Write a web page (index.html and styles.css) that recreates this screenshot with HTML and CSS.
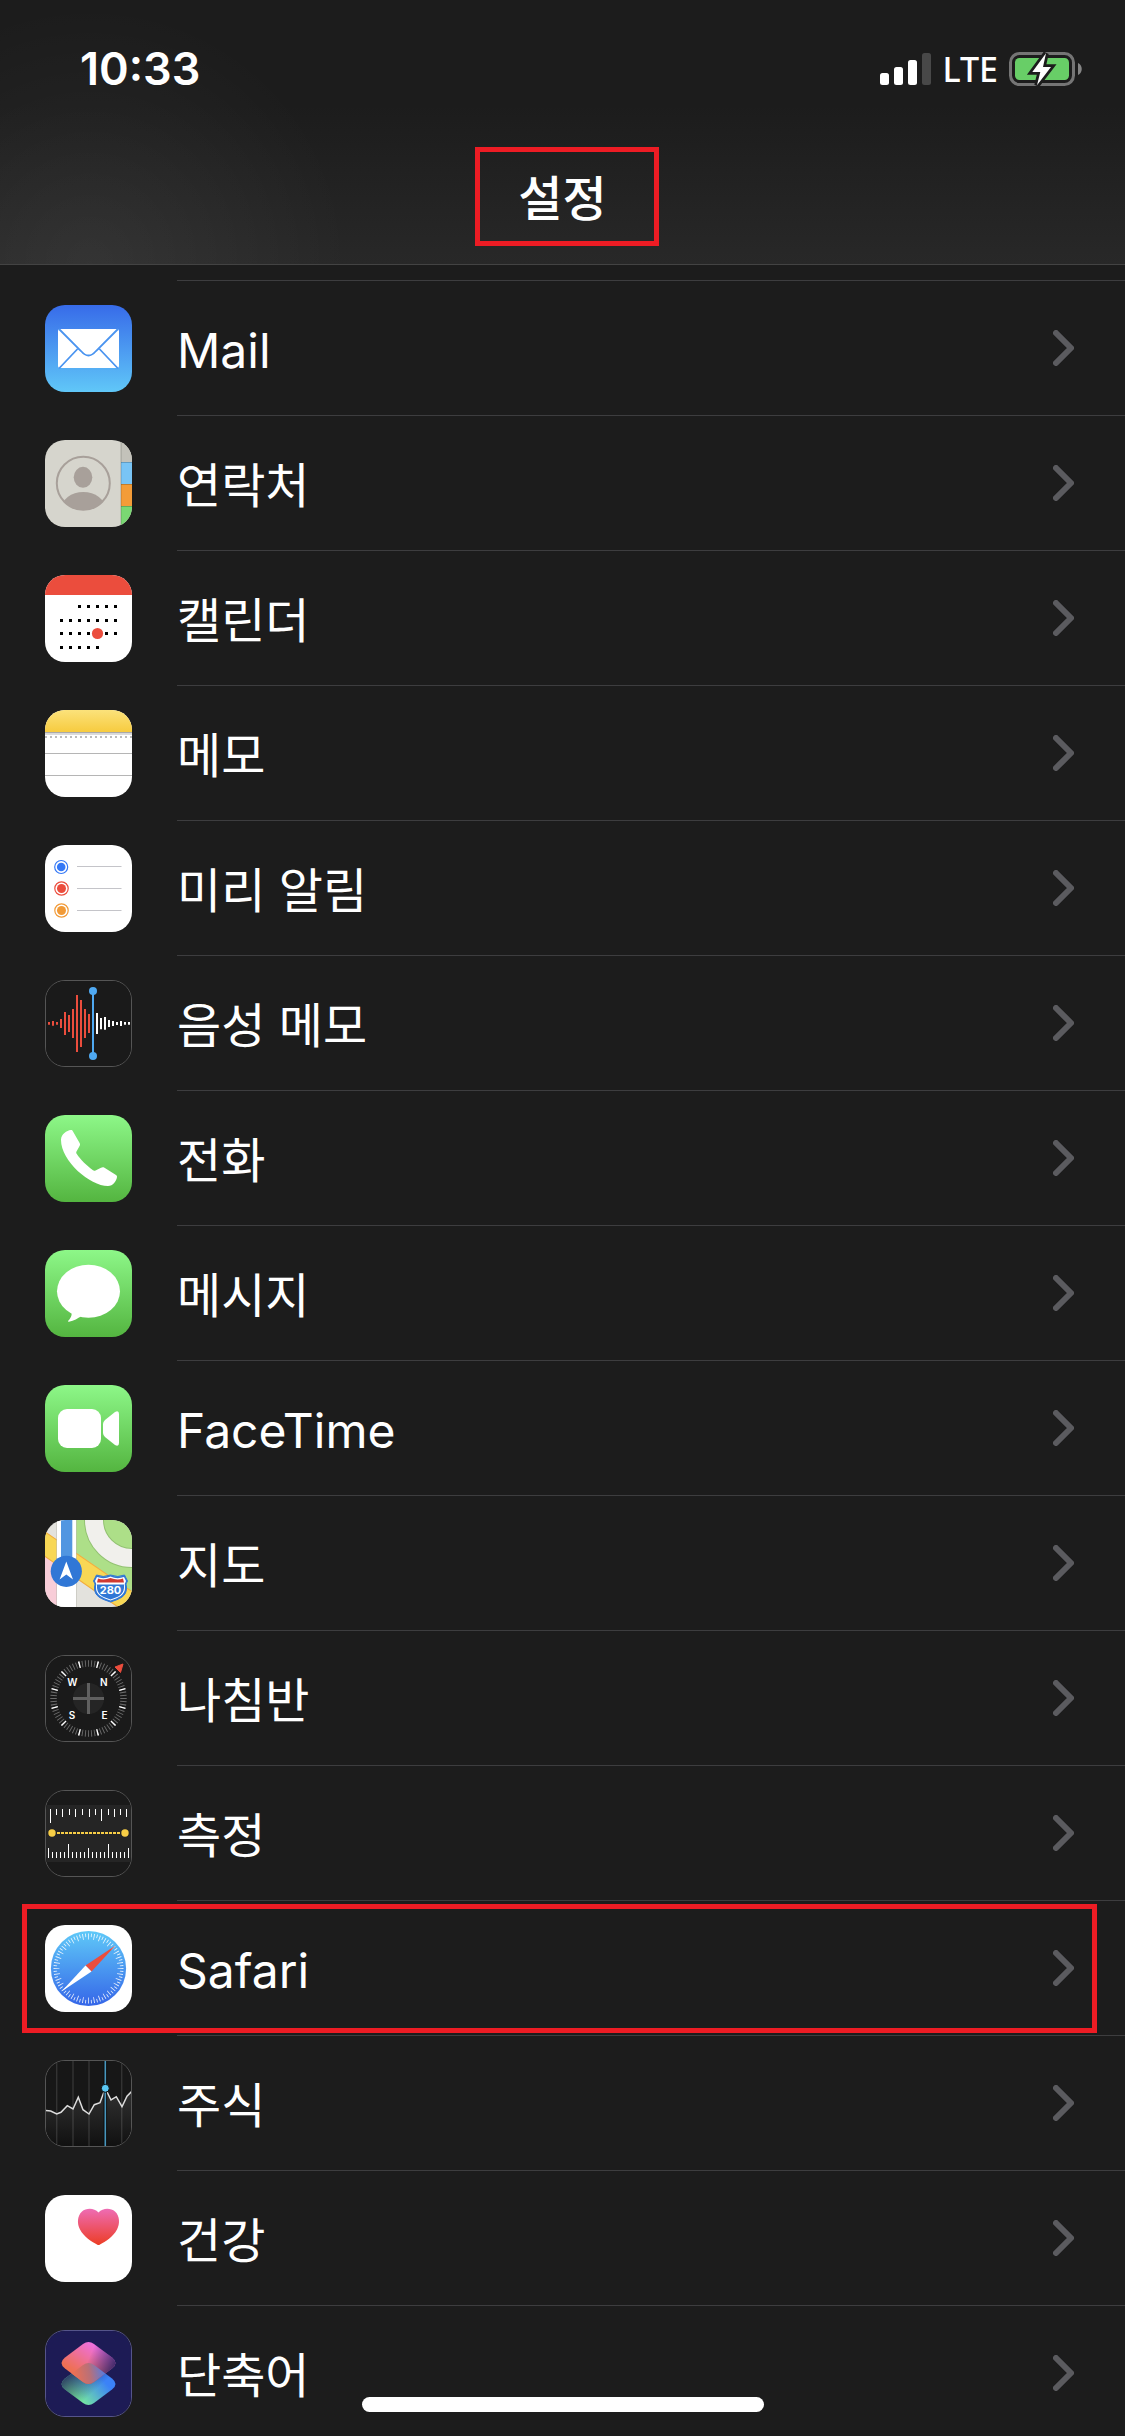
FILE: index.html
```html
<!DOCTYPE html>
<html lang="ko">
<head>
<meta charset="utf-8">
<meta name="viewport" content="width=device-width, initial-scale=1">
<title>설정</title>
<link rel="stylesheet" href="styles.css">
</head>
<body>
<svg class="defs" width="0" height="0" aria-hidden="true">
  <defs>
    <linearGradient id="green" x1="0" y1="0" x2="0" y2="1"><stop offset="0" stop-color="#8df788"/><stop offset="1" stop-color="#54b540"/></linearGradient>
    <linearGradient id="blue" x1="0" y1="0" x2="0" y2="1"><stop offset="0" stop-color="#376be9"/><stop offset="1" stop-color="#60c7f8"/></linearGradient>
    <linearGradient id="blue-up" x1="0" y1="0" x2="0" y2="1"><stop offset="0" stop-color="#5fc9f8"/><stop offset="1" stop-color="#3566e8"/></linearGradient>
    <symbol id="chevron" viewBox="0 0 21 36"><path d="M3 3 18 18 3 33" fill="none" stroke="#5b5b5f" stroke-width="6" stroke-linecap="round" stroke-linejoin="round"/></symbol>
  </defs>
</svg>
<div class="screen">
  <header class="header">
    <div class="status">
      <time class="status-time">10:33</time>
      <div class="status-icons">
        <svg class="signal" viewBox="0 0 51 32" aria-hidden="true"><g fill="#fff"><rect y="20" width="9" height="12" rx="2.5"/><rect x="14" y="14" width="9" height="18" rx="2.5"/><rect x="28" y="7" width="9" height="25" rx="2.5"/></g><rect x="42" width="9" height="32" rx="2.5" fill="#484848"/></svg>
        <span class="network">LTE</span>
        <svg class="battery" viewBox="0 0 73 34" aria-hidden="true"><rect x="1.5" y="1.5" width="63" height="31" rx="9" fill="none" stroke="#757575" stroke-width="3"/><path d="M69 11c5 2 5 10 0 12z" fill="#858585"/><rect x="6" y="6" width="54" height="22" rx="4.500" fill="#68ce67"/><path d="M37 1.300 23.300 20H31.300L28 33.300 42 15H34z" fill="#fff" stroke="#1c1c1c" stroke-width="5.500" paint-order="stroke"/></svg>
      </div>
    </div>
    <h1 class="title marked">설정</h1>
  </header>

  <main class="content">
    <ul class="list">
      <li class="item"><a class="row" href="#mail">
        <svg class="icon" viewBox="0 0 87 87" aria-hidden="true"><rect width="87" height="87" fill="url(#blue)"/><rect x="13" y="24" width="61" height="39" rx="2" fill="#fff"/><path d="M14 24 36 46Q43.500 55 51 46L73 24M14 63.500 32.500 44M73 63.500 54.500 44" fill="none" stroke="#4a94f0" stroke-width="1.800"/></svg>
        <span class="body"><span class="label latin">Mail</span><svg class="chevron"><use href="#chevron"/></svg></span></a></li>
      <li class="item"><a class="row" href="#contacts">
        <svg class="icon" viewBox="0 0 87 87" aria-hidden="true"><defs><clipPath id="face"><circle cx="38.300" cy="43.300" r="26.500"/></clipPath></defs><rect width="87" height="87" fill="#d6d5cd"/><path fill="#c3c2ba" d="M76 0h11v22H76z"/><path fill="#79c4f5" d="M76 22h11v22H76z"/><path fill="#f39c38" d="M76 44h11v22H76z"/><path fill="#7ad873" d="M76 66h11v21H76z"/><path d="M76 0v87M76 22.500h11M76 44.500h11M76 66.500h11" stroke="#000" stroke-opacity=".2"/><circle cx="38.300" cy="43.300" r="26.500" fill="none" stroke="#a8a09a" stroke-width="2"/><ellipse cx="38" cy="37.300" rx="9.300" ry="10.500" fill="#a8a09a"/><ellipse cx="38.300" cy="69" rx="22" ry="17" fill="#a8a09a" clip-path="url(#face)"/></svg>
        <span class="body"><span class="label">연락처</span><svg class="chevron"><use href="#chevron"/></svg></span></a></li>
      <li class="item"><a class="row" href="#calendar">
        <svg class="icon" viewBox="0 0 87 87" aria-hidden="true"><rect width="87" height="87" fill="#fff"/><rect width="87" height="20" fill="#eb4d3d"/><g stroke="#000" stroke-width="3" stroke-dasharray="3 6"><path d="M33 31.500H72"/><path d="M15 45.500H72"/><path d="M15 58.500H72"/><path d="M15 72.500H54"/></g><circle cx="52.500" cy="58.500" r="5.600" fill="#eb4d3d"/></svg>
        <span class="body"><span class="label">캘린더</span><svg class="chevron"><use href="#chevron"/></svg></span></a></li>
      <li class="item"><a class="row" href="#notes">
        <svg class="icon" viewBox="0 0 87 87" aria-hidden="true"><defs><linearGradient id="pad" x1="0" y1="0" x2="0" y2="1"><stop offset="0" stop-color="#fbe27b"/><stop offset="1" stop-color="#f7cb3f"/></linearGradient></defs><rect width="87" height="87" fill="#fff"/><rect width="87" height="22" fill="url(#pad)"/><path fill="#a9a9a9" d="M0 22h87v1.500H0z"/><path fill="#dcdcdc" d="M0 23.500h87v1.500H0z"/><path d="M0 27H87" stroke="#bbb" stroke-width="2" stroke-dasharray="2 3"/><path d="M0 43.500H87M0 65.500H87" stroke="#b5b5b5"/></svg>
        <span class="body"><span class="label">메모</span><svg class="chevron"><use href="#chevron"/></svg></span></a></li>
      <li class="item"><a class="row" href="#reminders">
        <svg class="icon" viewBox="0 0 87 87" aria-hidden="true"><rect width="87" height="87" fill="#fff"/><path d="M32 21.500H76.500M32 43.500H76.500M32 65.500H76.500" stroke="#c4c4c9"/><g fill="none" stroke-width="1.200"><circle cx="16.200" cy="22" r="6.500" stroke="#3478f6"/><circle cx="16.500" cy="43.500" r="6.700" stroke="#eb4d3d"/><circle cx="16.500" cy="65.500" r="6.700" stroke="#f19a37"/></g><circle cx="16.200" cy="22" r="4.300" fill="#3478f6"/><circle cx="16.500" cy="43.500" r="4.500" fill="#eb4d3d"/><circle cx="16.500" cy="65.500" r="4.500" fill="#f19a37"/></svg>
        <span class="body"><span class="label">미리 알림</span><svg class="chevron"><use href="#chevron"/></svg></span></a></li>
      <li class="item"><a class="row" href="#voice">
        <svg class="icon outlined" viewBox="1 1 85 85" aria-hidden="true"><rect width="87" height="87" fill="#1a1a1a"/><path d="M4 42v2.700M8 41v4.700M12 42v2.700M16 39v9M20 32v23M24 35v17M28 29v29M32 15v57M36 20v47M40 29v29M44 34v19" stroke="#eb4d3d" stroke-width="2"/><path d="M52 33v21M56 38v11.300M60 37v12.700M64 40v7M68 41v5M72 42v3M76 41v5M80 42v2.700M84 42v2.700" stroke="#fff" stroke-width="2"/><path d="M48 11V76" stroke="#4fa9f2" stroke-width="2"/><circle cx="48" cy="11" r="4" fill="#4fa9f2"/><circle cx="48" cy="76" r="4" fill="#4fa9f2"/></svg>
        <span class="body"><span class="label">음성 메모</span><svg class="chevron"><use href="#chevron"/></svg></span></a></li>
      <li class="item"><a class="row" href="#phone">
        <svg class="icon" viewBox="0 0 87 87" aria-hidden="true"><rect width="87" height="87" fill="url(#green)"/><path fill="#fff" d="M25.700 15C22 15.500 16 19 16 25C16 46 45 71 63 71C68 71 71.500 66 72 62C72 61 71.800 60.500 71 60L59.500 52.800C58 52 57 52.300 56 52.800L50.500 55.400C49.500 55.800 48.800 55.800 48 55.200C42 51 35 44 31.800 39C31.200 38 31 37.200 31.500 36.400L34.700 30.800C35.200 29.800 35.200 29 34.600 28L28 16.500C27.400 15.300 26.800 14.900 25.700 15Z"/></svg>
        <span class="body"><span class="label">전화</span><svg class="chevron"><use href="#chevron"/></svg></span></a></li>
      <li class="item"><a class="row" href="#messages">
        <svg class="icon" viewBox="0 0 87 87" aria-hidden="true"><rect width="87" height="87" fill="url(#green)"/><ellipse cx="43.500" cy="41.300" rx="31.500" ry="26.500" fill="#fff"/><path d="M26 61C28 65 25 69 23 71Q23 72 24 71.700C29 71 33 68 36 66.500z" fill="#fff"/></svg>
        <span class="body"><span class="label">메시지</span><svg class="chevron"><use href="#chevron"/></svg></span></a></li>
      <li class="item"><a class="row" href="#facetime">
        <svg class="icon" viewBox="0 0 87 87" aria-hidden="true"><rect width="87" height="87" fill="url(#green)"/><rect x="13" y="24" width="43" height="39" rx="9" fill="#fff"/><path d="M58 39Q58 37 60 35L70 27Q74 25 74 29V58Q74 62 70 60L60 52Q58 50 58 48z" fill="#fff"/></svg>
        <span class="body"><span class="label latin">FaceTime</span><svg class="chevron"><use href="#chevron"/></svg></span></a></li>
      <li class="item"><a class="row" href="#maps">
        <svg class="icon" viewBox="0 0 87 87" aria-hidden="true"><rect width="87" height="87" fill="#e3e2dd"/><path d="M31 0H87V72L31 33z" fill="#addf88"/><path d="M0 35H12V87H0z" fill="#f8cdd8"/><circle cx="87" cy="0" r="38" fill="none" stroke="#93c272" stroke-width="20"/><circle cx="87" cy="0" r="38" fill="none" stroke="#f1f0ec" stroke-width="18"/><path d="M-2 10.500 89 73V98L-2 35z" fill="#f8d755" stroke="#f3ac3c" stroke-width="1.200"/><path d="M11.500 0h20v87h-20z" fill="#b9b8b0"/><path d="M12 0h19v87H12z" fill="#fff"/><path d="M16 0h11.300v45H16z" fill="#5196e1"/><circle cx="21.300" cy="51.300" r="15.600" fill="#3077d6"/><path d="M21.300 41.500 28 59.500 21.300 54.500 14.600 59.500z" fill="#fff"/><path d="M51.500 55Q58 58 65.500 55Q73 58 79.500 55L82.500 61Q80 64 81.500 67C82 77 74 79 65.500 82C57 79 49 77 49.500 67Q51 64 48.500 61z" fill="#3077d6" stroke="#3077d6" stroke-width="1"/><path d="M52 57Q59 59.500 65.500 56.500Q72 59.500 79 57L81 61Q79 64 80 67C80.500 75.500 73 78 65.500 80.500C58 78 50.500 75.500 51 67Q52 64 50 61z" fill="#fff"/><path d="M53 58.500Q59 60.500 65.500 58Q72 60.500 78 58.500L79 62.500H52z" fill="#cf3a32"/><path d="M52 64.500H79C80 75 73 77 65.500 79.500C58 77 51 75 52 64.500z" fill="#3077d6"/><text x="65.500" y="74" class="shield">280</text></svg>
        <span class="body"><span class="label">지도</span><svg class="chevron"><use href="#chevron"/></svg></span></a></li>
      <li class="item"><a class="row" href="#compass">
        <svg class="icon outlined" viewBox="1 1 85 85" aria-hidden="true"><rect width="87" height="87" fill="#1a1a1a"/><circle cx="43.500" cy="43.500" r="15.500" fill="#252525"/><path d="M43.500 28V59M28 43.500H59" stroke="#606060" stroke-width="3"/><g fill="none" stroke-width="6.500"><circle cx="43.500" cy="43.500" r="35" pathLength="720" stroke="#6b6b6b" stroke-dasharray="3 7" stroke-dashoffset="1.500"/><circle cx="43.500" cy="43.500" r="35" pathLength="720" stroke="#fff" stroke-dasharray="4.500 55.500" stroke-dashoffset="-27.750"/></g><path d="M70 12 78 9 75.500 17.500z" fill="#eb4d3d" stroke="#eb4d3d"/><g class="compass-letters"><text x="27.300" y="31">W</text><text x="58.700" y="31">N</text><text x="27" y="64">S</text><text x="59.500" y="64">E</text></g></svg>
        <span class="body"><span class="label">나침반</span><svg class="chevron"><use href="#chevron"/></svg></span></a></li>
      <li class="item"><a class="row" href="#measure">
        <svg class="icon outlined" viewBox="1 1 85 85" aria-hidden="true"><rect width="87" height="87" fill="#1a1a1a"/><rect y="15" width="87" height="57" fill="#252525"/><path d="M5.500 19v14M11.500 19v6M17.500 19v8M24.500 19v6M30.500 19v8M37.500 19v6M44.500 19v8M50.500 19v6M56.500 19v12M63.500 19v6M69.500 19v8M75.500 19v6M81.500 19v8M3.500 58v10M7.500 62v6M11.500 62v6M15.500 62v6M19.500 62v6M23.500 54v14M27.500 62v6M31.500 62v6M35.500 62v6M39.500 62v6M43.500 58v10M47.500 62v6M51.500 62v6M55.500 62v6M59.500 62v6M63.500 54v14M67.500 62v6M71.500 62v6M75.500 62v6M79.500 62v6M83.500 58v10" stroke="#fff"/><path d="M12 43H76" stroke="#f8ce46" stroke-width="2" stroke-dasharray="3 1"/><circle cx="7" cy="43" r="3.700" fill="#f8ce46"/><circle cx="80" cy="43" r="3.700" fill="#f8ce46"/></svg>
        <span class="body"><span class="label">측정</span><svg class="chevron"><use href="#chevron"/></svg></span></a></li>
      <li class="item marked"><a class="row" href="#safari">
        <svg class="icon" viewBox="0 0 87 87" aria-hidden="true"><rect width="87" height="87" fill="#fff"/><circle cx="43.500" cy="43.500" r="37.600" fill="url(#blue-up)"/><g fill="none" stroke="#fff" stroke-opacity=".85"><circle cx="43.500" cy="43.500" r="32" pathLength="720" stroke-width="6" stroke-dasharray="3 17" stroke-dashoffset="1.500"/><circle cx="43.500" cy="43.500" r="33.250" pathLength="720" stroke-width="3.500" stroke-dasharray="3 17" stroke-dashoffset="-8.500"/></g><path d="M70.500 20.500 40.500 40.500 46.500 46.500z" fill="#eb4d3d"/><path d="M16.500 66.500 40.500 40.500 46.500 46.500z" fill="#fff"/></svg>
        <span class="body"><span class="label latin">Safari</span><svg class="chevron"><use href="#chevron"/></svg></span></a></li>
      <li class="item"><a class="row" href="#stocks">
        <svg class="icon outlined" viewBox="1 1 85 85" aria-hidden="true"><defs><linearGradient id="area" x1="0" y1="0" x2="0" y2="1"><stop offset="0" stop-color="#333"/><stop offset="1" stop-color="#101010"/></linearGradient></defs><rect width="87" height="87" fill="#171717"/><path d="M1 50.300 5.700 51 11.700 54 16 52.300 22.300 45.700 28 49 33.300 37.300 38 49.700 44 54 49.300 44.700 55 42.700 60.300 28.300 66 40 71.300 36.700 77 46.700 82 36.300 87 30.700V87H0z" fill="url(#area)"/><path d="M11.700 0V87M28 0V87M44 0V87M76.700 0V87" stroke="#fff" stroke-opacity=".12" stroke-width="1.500"/><path d="M0 50.300 5.700 51 11.700 54 16 52.300 22.300 45.700 28 49 33.300 37.300 38 49.700 44 54 49.300 44.700 55 42.700 60.300 28.300 66 40 71.300 36.700 77 46.700 82 36.300 88 30" fill="none" stroke="#ddd" stroke-width="1.500"/><path d="M60.300 0V87" stroke="#0c0c0c" stroke-width="3.500"/><path d="M60.300 0V87" stroke="#4796bd" stroke-width="1.600"/><circle cx="60.300" cy="28.300" r="4" fill="#5ac8f5" stroke="#0c0c0c"/></svg>
        <span class="body"><span class="label">주식</span><svg class="chevron"><use href="#chevron"/></svg></span></a></li>
      <li class="item"><a class="row" href="#health">
        <svg class="icon" viewBox="0 0 87 87" aria-hidden="true"><defs><linearGradient id="heart" x1="0" y1="0" x2="0" y2="1"><stop offset="0" stop-color="#ee6cb4"/><stop offset="1" stop-color="#ec3d25"/></linearGradient></defs><rect width="87" height="87" fill="#fff"/><path d="M53.500 17.500C49 12.500 41 13 37 16.500C32 21 32 29 35 34.500C39 42 46.500 46.500 52 49.500Q53.500 50.500 55 49.500C60.500 46.500 68 42 72 34.500C75 29 75 21 70 16.500C66 13 58 12.500 53.500 17.500z" fill="url(#heart)"/></svg>
        <span class="body"><span class="label">건강</span><svg class="chevron"><use href="#chevron"/></svg></span></a></li>
      <li class="item"><a class="row" href="#shortcuts">
        <svg class="icon outlined indigo" viewBox="1 1 85 85" aria-hidden="true"><defs>
          <linearGradient id="low" gradientUnits="userSpaceOnUse" x1="38" y1="53" x2="62" y2="33"><stop offset="0" stop-color="#76e8a0"/><stop offset="1" stop-color="#3b82f7"/></linearGradient>
          <linearGradient id="low-fade" gradientUnits="userSpaceOnUse" x1="22" y1="25" x2="42" y2="47"><stop offset="0" stop-color="#1d1b55" stop-opacity=".8"/><stop offset="1" stop-color="#1d1b55" stop-opacity="0"/></linearGradient>
          <linearGradient id="top" gradientUnits="userSpaceOnUse" x1="28" y1="40" x2="46" y2="14"><stop offset="0" stop-color="#ee7055"/><stop offset="1" stop-color="#ee70da"/></linearGradient>
          <linearGradient id="top-fade" gradientUnits="userSpaceOnUse" x1="44" y1="28" x2="68" y2="38"><stop offset="0" stop-color="#1d1b55" stop-opacity="0"/><stop offset="1" stop-color="#1d1b55" stop-opacity=".8"/></linearGradient>
          <linearGradient id="mix" gradientUnits="userSpaceOnUse" x1="30" y1="48" x2="60" y2="42"><stop offset="0" stop-color="#ea7055"/><stop offset=".5" stop-color="#b97078"/><stop offset="1" stop-color="#567ce0"/></linearGradient>
          <path id="tile" d="M38 14Q43.500 10 49 14L67 27.500Q74 33 67 38.500L49 52Q43.500 56 38 52L20 38.500Q13 33 20 27.500z"/>
          <clipPath id="lower-clip"><use href="#tile" y="21"/></clipPath></defs>
          <rect width="87" height="87" fill="#1d1b55"/><use href="#tile" y="21" fill="url(#low)"/><use href="#tile" y="21" fill="url(#low-fade)"/><use href="#tile" fill="url(#top)"/><use href="#tile" fill="url(#top-fade)"/><g clip-path="url(#lower-clip)"><use href="#tile" fill="url(#mix)"/></g></svg>
        <span class="body"><span class="label">단축어</span><svg class="chevron"><use href="#chevron"/></svg></span></a></li>
    </ul>
  </main>
  <div class="home-bar"></div>
</div>
</body>
</html>
```
FILE: styles.css
```css
* {
  box-sizing: border-box;
}

body {
  margin: 0;
  background: #1c1c1c;
  color: #fff;
  font-family: Inter, "Noto Sans CJK KR", sans-serif;
}

.defs {
  position: absolute;
}

.screen {
  position: relative;
  display: flex;
  flex-direction: column;
  height: 100vh;
  overflow: hidden;
}

/* Header */
.header {
  flex: none;
  border-bottom: 1px solid #434343;
  background:
    radial-gradient(circle 260px at 8% 100%, rgba(255, 255, 255, 0.06), transparent),
    linear-gradient(#1c1c1c 40%, #282828);
}

.status {
  display: flex;
  align-items: center;
  justify-content: space-between;
  height: 137px;
  padding: 0 43px 0 80px;
}

.status-time {
  font-size: 45px;
  font-weight: 600;
}

.status-icons {
  display: flex;
  align-items: center;
  gap: 11px;
}

.signal {
  width: 51px;
  height: 32px;
}

.network {
  font-family: "Noto Sans", sans-serif;
  font-size: 34px;
  font-weight: 500;
  line-height: 40px;
}

.battery {
  width: 73px;
  height: 34px;
}

.title {
  position: relative;
  width: 184px;
  height: 127px;
  margin: 0 auto;
  font-family: "Noto Sans CJK KR", sans-serif;
  font-size: 48px;
  font-weight: 500;
  line-height: 117px;
  text-align: center;
}

/* Red call-out frames */
.marked::after {
  content: "";
  position: absolute;
  border: 5px solid #ed1c24;
  pointer-events: none;
}

.title.marked::after {
  inset: 10px -4px 18px 4px;
}

.item.marked::after {
  inset: 4px 28px 2px 22px;
}

/* List */
.content {
  flex: 1;
  min-height: 0;
  padding-top: 15px;
  overflow: hidden;
}

.list {
  margin: 0;
  padding: 0;
  list-style: none;
}

.item {
  position: relative;
}

.row {
  display: flex;
  align-items: center;
  gap: 45px;
  padding-left: 45px;
  color: inherit;
  text-decoration: none;
}

.icon {
  flex: none;
  width: 87px;
  height: 87px;
  margin-top: 2px;
  border-radius: 20px;
}

.outlined {
  border: 1px solid #555;
}

.indigo {
  border-color: #55548a;
}

.body {
  display: flex;
  flex: 1;
  align-items: center;
  justify-content: space-between;
  height: 135px;
  padding-right: 51px;
  border-top: 1px solid #3d3d3f;
}

.label {
  padding-top: 6px;
  font-size: 48px;
  line-height: 60px;
}

.chevron {
  width: 21px;
  height: 36px;
}

.home-bar {
  position: absolute;
  bottom: 24px;
  left: 50%;
  width: 402px;
  height: 15px;
  border-radius: 8px;
  background: #fff;
  transform: translateX(-50%);
}

/* Lettering inside icons */
.shield {
  fill: #fff;
  font-size: 11px;
  font-weight: 700;
  text-anchor: middle;
}

.compass-letters {
  fill: #fff;
  font-size: 10px;
  font-weight: 600;
  text-anchor: middle;
}
```
